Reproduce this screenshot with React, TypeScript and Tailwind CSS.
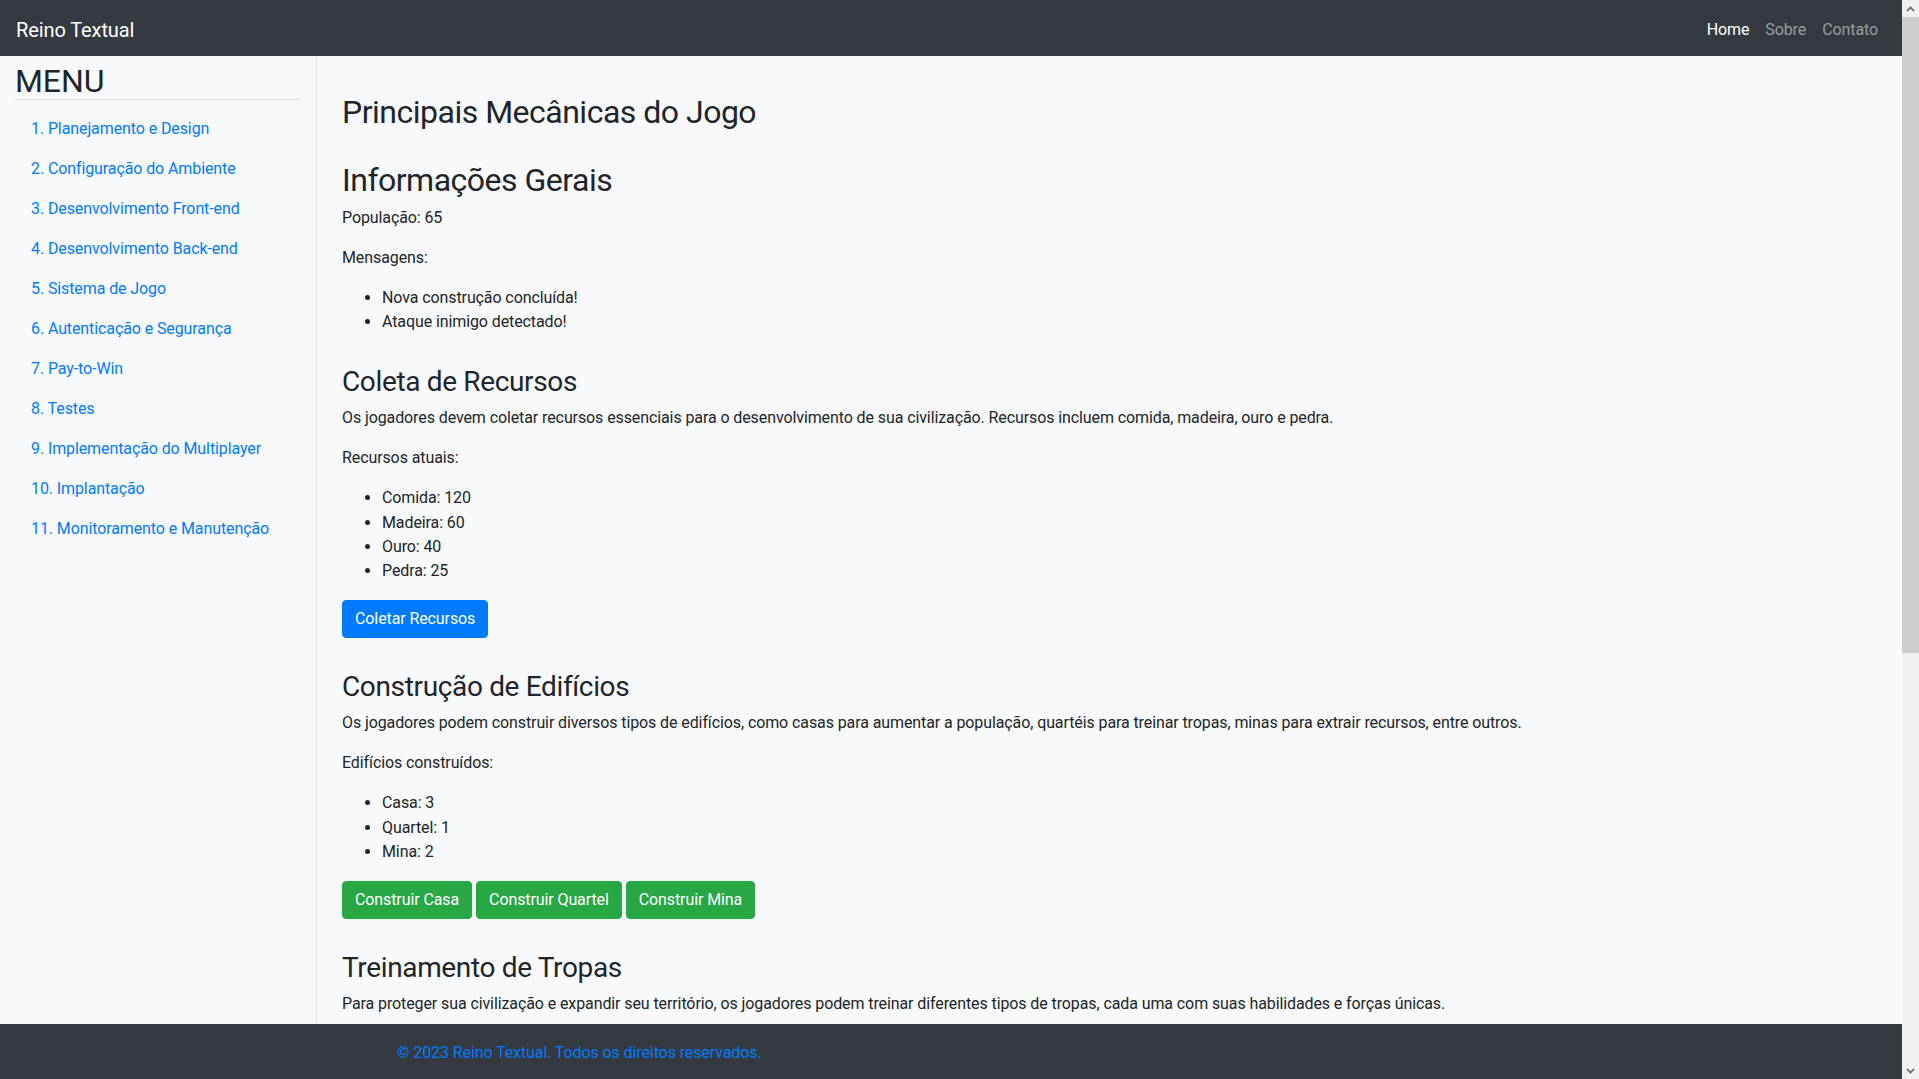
import { ReactNode } from 'react'

const MENU_ITEMS = [
  '1. Planejamento e Design',
  '2. Configuração do Ambiente',
  '3. Desenvolvimento Front-end',
  '4. Desenvolvimento Back-end',
  '5. Sistema de Jogo',
  '6. Autenticação e Segurança',
  '7. Pay-to-Win',
  '8. Testes',
  '9. Implementação do Multiplayer',
  '10. Implantação',
  '11. Monitoramento e Manutenção',
]

interface Section {
  title: string
  text: string
  label: string
  items: string[]
  buttons: string[]
  tone: 'blue' | 'green'
}

const EXTRA_SECTIONS: Section[] = [
  {
    title: 'Combate',
    text: 'Os jogadores podem atacar outras civilizações para conquistar recursos e territórios. O resultado depende da força das tropas.',
    label: 'Últimas batalhas:',
    items: ['Vitória contra Reino do Norte', 'Derrota contra Império Dourado'],
    buttons: ['Atacar'],
    tone: 'blue',
  },
  {
    title: 'Comércio',
    text: 'Os jogadores podem trocar recursos entre si no mercado, negociando preços e formando parcerias comerciais.',
    label: 'Ofertas disponíveis:',
    items: ['10 Ouro por 50 Madeira', '20 Pedra por 40 Comida'],
    buttons: ['Abrir Mercado'],
    tone: 'blue',
  },
]

function Btn({ children, tone }: { children: ReactNode; tone: 'blue' | 'green' }) {
  const color =
    tone === 'blue'
      ? 'bg-[#007bff] border-[#007bff]'
      : 'bg-[#28a745] border-[#28a745]'
  return (
    <button className={`${color} rounded border px-3 py-[6px] text-base leading-6 tracking-[-0.1px] text-white`}>
      {children}
    </button>
  )
}

function Bullets({ items }: { items: string[] }) {
  return (
    <ul className="mb-4 list-disc pl-10">
      {items.map((item) => (
        <li key={item} className="leading-[24.4px]">{item}</li>
      ))}
    </ul>
  )
}

function H3({ children }: { children: ReactNode }) {
  return (
    <h3 className="mb-[8px] pt-[2px] text-[28px] leading-[33.6px] font-normal tracking-[-0.35px]">
      {children}
    </h3>
  )
}

function ScrollArrow({ up }: { up?: boolean }) {
  return (
    <div className="flex h-[17px] items-center justify-center">
      <svg width="9" height="6" viewBox="0 0 9 6">
        <path
          d={up ? 'M1 5 L4.5 1.5 L8 5' : 'M1 1 L4.5 4.5 L8 1'}
          fill="none"
          stroke="#606060"
          strokeWidth="1.6"
        />
      </svg>
    </div>
  )
}

export default function App() {
  return (
    <div className="min-h-screen bg-[#f8f9fa] pr-[17px] font-['Segoe_UI','Roboto',sans-serif] text-base leading-6 tracking-[-0.1px] text-[#212529]">
      <nav className="flex h-14 items-center justify-between bg-[#343a40] px-4 pt-[4px]">
        <a className="text-xl leading-[30px] text-white">Reino Textual</a>
        <ul className="flex">
          <li><a className="px-2 text-white">Home</a></li>
          <li><a className="px-2 text-white/50">Sobre</a></li>
          <li><a className="px-2 text-white/50">Contato</a></li>
        </ul>
      </nav>

      <div className="flex">
        <aside className="w-[317px] shrink-0 border-r border-[#dee2e6] px-[15px] pt-[8px]">
          <h2 className="text-[32px] leading-[35px] font-normal">MENU</h2>
          <hr className="border-[#dfe0e1]" />
          <ul className="mt-[9px]">
            {MENU_ITEMS.map((item) => (
              <li key={item}>
                <a className="block px-4 py-2 text-[#007bff]">{item}</a>
              </li>
            ))}
          </ul>
        </aside>

        <main className="min-w-0 flex-1 pb-[80px] pl-[25px] pr-6 pt-[35px]">
          <h2 className="mb-[6px] pt-[2px] text-[32px] leading-[38.4px] font-normal tracking-[-0.5px]">
            Principais Mecânicas do Jogo
          </h2>

          <section className="mt-[29px]">
            <h2 className="mb-[6px] pt-[1px] text-[32px] leading-[38.4px] font-normal tracking-[-0.5px]">
              Informações Gerais
            </h2>
            <p className="mb-4">População: 65</p>
            <p className="mb-4">Mensagens:</p>
            <Bullets items={['Nova construção concluída!', 'Ataque inimigo detectado!']} />
          </section>

          <section className="mt-[28px]">
            <H3>Coleta de Recursos</H3>
            <p className="mb-4">
              Os jogadores devem coletar recursos essenciais para o desenvolvimento de sua civilização. Recursos incluem comida, madeira, ouro e pedra.
            </p>
            <p className="mb-4">Recursos atuais:</p>
            <Bullets items={['Comida: 120', 'Madeira: 60', 'Ouro: 40', 'Pedra: 25']} />
            <Btn tone="blue">Coletar Recursos</Btn>
          </section>

          <section className="mt-[30px]">
            <H3>Construção de Edifícios</H3>
            <p className="mb-4">
              Os jogadores podem construir diversos tipos de edifícios, como casas para aumentar a população, quartéis para treinar tropas, minas para extrair recursos, entre outros.
            </p>
            <p className="mb-4">Edifícios construídos:</p>
            <Bullets items={['Casa: 3', 'Quartel: 1', 'Mina: 2']} />
            <div className="flex gap-1">
              <Btn tone="green">Construir Casa</Btn>
              <Btn tone="green">Construir Quartel</Btn>
              <Btn tone="green">Construir Mina</Btn>
            </div>
          </section>

          <section className="mt-[30px]">
            <H3>Treinamento de Tropas</H3>
            <p className="mb-4">
              Para proteger sua civilização e expandir seu território, os jogadores podem treinar diferentes tipos de tropas, cada uma com suas habilidades e forças únicas.
            </p>
            <p className="mb-4">Tropas disponíveis:</p>
            <Bullets items={['Soldados: 10', 'Arqueiros: 5', 'Cavaleiros: 2']} />
            <div className="flex gap-1">
              <Btn tone="blue">Treinar Soldado</Btn>
              <Btn tone="blue">Treinar Arqueiro</Btn>
              <Btn tone="blue">Treinar Cavaleiro</Btn>
            </div>
          </section>

          {EXTRA_SECTIONS.map((s) => (
            <section key={s.title} className="mt-[30px]">
              <H3>{s.title}</H3>
              <p className="mb-4">{s.text}</p>
              <p className="mb-4">{s.label}</p>
              <Bullets items={s.items} />
              <div className="flex gap-1">
                {s.buttons.map((b) => (
                  <Btn key={b} tone={s.tone}>{b}</Btn>
                ))}
              </div>
            </section>
          ))}
        </main>
      </div>

      <footer className="fixed bottom-0 left-0 right-[17px] flex h-[55px] items-center bg-[#343a40] pl-[397px] pt-[3px]">
        <span className="text-[#007bff]">© 2023 Reino Textual. Todos os direitos reservados.</span>
      </footer>

      {/* window scrollbar as it appears in the capture */}
      <div className="fixed right-0 top-0 flex h-screen w-[17px] flex-col bg-[#f0f0f0]">
        <ScrollArrow up />
        <div className="flex-1">
          <div className="h-[636px] bg-[#cdcdcd]" />
        </div>
        <ScrollArrow />
      </div>
    </div>
  )
}
